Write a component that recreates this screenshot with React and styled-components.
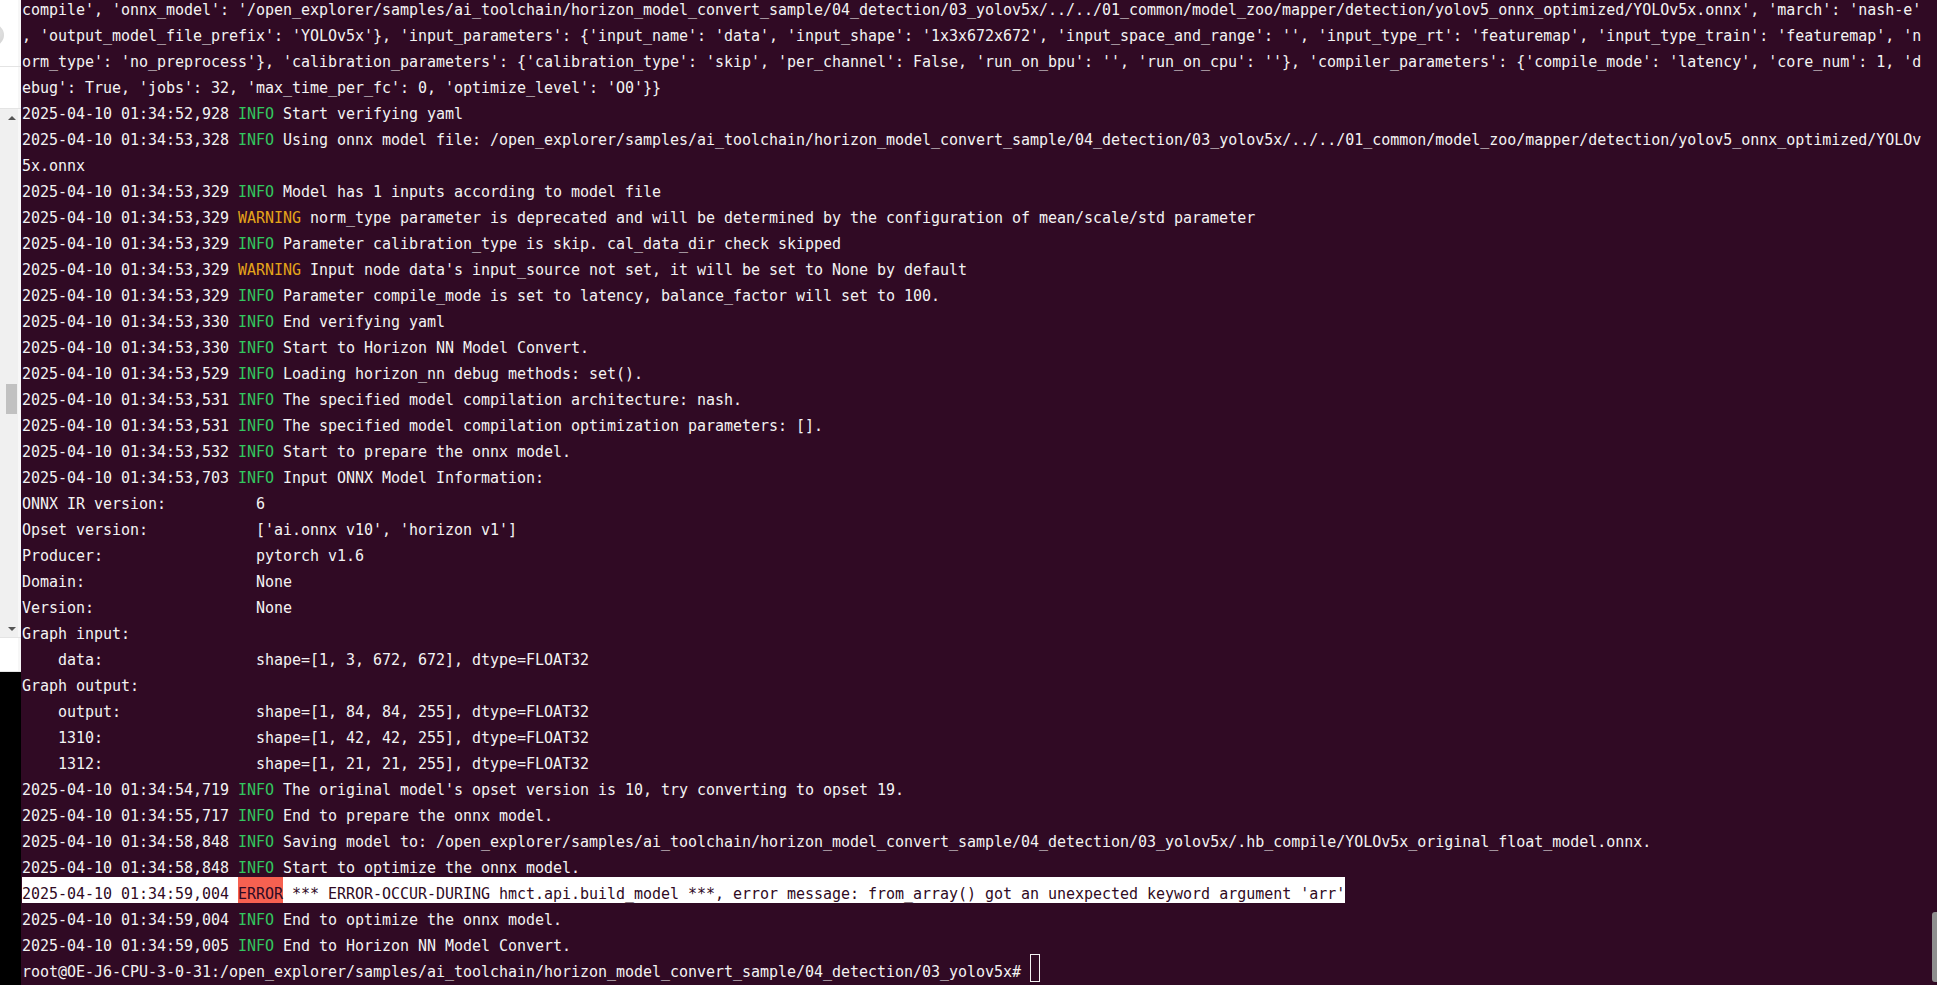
import React from 'react';
import styled, { createGlobalStyle } from 'styled-components';

const GlobalStyle = createGlobalStyle`
  html, body {
    margin: 0;
    padding: 0;
    height: 100%;
    background: #300a24;
    overflow: hidden;
  }
`;

const Screen = styled.div`
  display: flex;
  width: 100vw;
  height: 100vh;
  overflow: hidden;
`;

// left: edge of another window that peeks in
const SideStrip = styled.aside`
  width: 21px;
  flex: none;
  display: flex;
  flex-direction: column;
  background: #000;
`;

const SidePanel = styled.div`
  box-sizing: border-box;
  height: ${p => p.$h}px;
  flex: none;
  background: #fff;
  border-bottom: 1px solid #e4e4e4;
  box-shadow: inset -3px 0 0 #f7f7f7;
  display: flex;
  align-items: flex-start;
  overflow: hidden;
`;

const Avatar = styled.div`
  width: 22px;
  height: 22px;
  flex: none;
  margin: 24px 0 0 -18px;
  border-radius: 50%;
  background: radial-gradient(circle at 70% 40%, #e2e2e2, #c9c9c9);
`;

const Track = styled.div`
  box-sizing: border-box;
  height: 529px;
  flex: none;
  display: flex;
  flex-direction: column;
  background: #f0f0f0;
  border-bottom: 1px solid #e4e4e4;
  box-shadow: inset -3px 0 0 #f7f7f7;
`;

const ArrowBtn = styled.div`
  height: ${p => p.$h}px;
  flex: none;
  display: flex;
  align-items: center;
  padding-left: 8px;
`;

const Arrow = styled.span`
  width: 0;
  height: 0;
  border-left: 4px solid transparent;
  border-right: 4px solid transparent;
  ${p => p.$dir === 'up'
    ? 'border-bottom: 4px solid #555;'
    : 'border-top: 4px solid #555;'}
`;

const Rail = styled.div`
  flex: 1;
  padding-left: 6px;
`;

const Thumb = styled.div`
  width: 11px;
  height: 30px;
  margin-top: ${p => p.$offset}px;
  background: #c1c1c1;
`;

const BlackFill = styled.div`
  flex: 1;
  background: #000;
`;

const Terminal = styled.main`
  flex: 1;
  position: relative;
  background: #300a24;
  overflow: hidden;
  padding-left: 1px;
  font-family: "DejaVu Sans Mono", "Liberation Mono", monospace;
  font-size: 15px;
  letter-spacing: -0.03px;
  color: #f3f3f3;
`;

const Lines = styled.div`
  margin-top: -7px;
`;

const Row = styled.div`
  height: 26px;
  line-height: 34px;
  white-space: pre;
  width: ${p => (p.$selected ? 'fit-content' : 'auto')};
  background: ${p => (p.$selected ? '#ffffff' : 'transparent')};
  color: ${p => (p.$selected ? '#300a24' : 'inherit')};
`;

const levelColors = {
  INFO: '#33c65f',
  WARNING: '#e3a41a',
};

const Level = styled.span`
  color: ${p => levelColors[p.$level]};
`;

const ErrorTag = styled.span`
  display: inline-block;
  height: 26px;
  vertical-align: top;
  background: #f66151;
  color: #300a24;
`;

const Cursor = styled.span`
  display: inline-block;
  box-sizing: border-box;
  width: 10px;
  height: 28px;
  vertical-align: top;
  margin-top: -1px;
  border: 1px solid #f3f3f3;
`;

const OverlayScroll = styled.div`
  position: absolute;
  right: 0;
  top: 912px;
  width: 5px;
  height: 70px;
  border-radius: 3px 0 0 3px;
  background: #8f8f8f;
`;

const kv = (k, v) => k.padEnd(26, ' ') + v;

const rows = [
  { t: 'plain', s: "compile', 'onnx_model': '/open_explorer/samples/ai_toolchain/horizon_model_convert_sample/04_detection/03_yolov5x/../../01_common/model_zoo/mapper/detection/yolov5_onnx_optimized/YOLOv5x.onnx', 'march': 'nash-e'" },
  { t: 'plain', s: ", 'output_model_file_prefix': 'YOLOv5x'}, 'input_parameters': {'input_name': 'data', 'input_shape': '1x3x672x672', 'input_space_and_range': '', 'input_type_rt': 'featuremap', 'input_type_train': 'featuremap', 'n" },
  { t: 'plain', s: "orm_type': 'no_preprocess'}, 'calibration_parameters': {'calibration_type': 'skip', 'per_channel': False, 'run_on_bpu': '', 'run_on_cpu': ''}, 'compiler_parameters': {'compile_mode': 'latency', 'core_num': 1, 'd" },
  { t: 'plain', s: "ebug': True, 'jobs': 32, 'max_time_per_fc': 0, 'optimize_level': 'O0'}}" },
  { t: 'log', ts: '2025-04-10 01:34:52,928', lv: 'INFO', s: 'Start verifying yaml' },
  { t: 'log', ts: '2025-04-10 01:34:53,328', lv: 'INFO', s: 'Using onnx model file: /open_explorer/samples/ai_toolchain/horizon_model_convert_sample/04_detection/03_yolov5x/../../01_common/model_zoo/mapper/detection/yolov5_onnx_optimized/YOLOv' },
  { t: 'plain', s: '5x.onnx' },
  { t: 'log', ts: '2025-04-10 01:34:53,329', lv: 'INFO', s: 'Model has 1 inputs according to model file' },
  { t: 'log', ts: '2025-04-10 01:34:53,329', lv: 'WARNING', s: 'norm_type parameter is deprecated and will be determined by the configuration of mean/scale/std parameter' },
  { t: 'log', ts: '2025-04-10 01:34:53,329', lv: 'INFO', s: 'Parameter calibration_type is skip. cal_data_dir check skipped' },
  { t: 'log', ts: '2025-04-10 01:34:53,329', lv: 'WARNING', s: "Input node data's input_source not set, it will be set to None by default" },
  { t: 'log', ts: '2025-04-10 01:34:53,329', lv: 'INFO', s: 'Parameter compile_mode is set to latency, balance_factor will set to 100.' },
  { t: 'log', ts: '2025-04-10 01:34:53,330', lv: 'INFO', s: 'End verifying yaml' },
  { t: 'log', ts: '2025-04-10 01:34:53,330', lv: 'INFO', s: 'Start to Horizon NN Model Convert.' },
  { t: 'log', ts: '2025-04-10 01:34:53,529', lv: 'INFO', s: 'Loading horizon_nn debug methods: set().' },
  { t: 'log', ts: '2025-04-10 01:34:53,531', lv: 'INFO', s: 'The specified model compilation architecture: nash.' },
  { t: 'log', ts: '2025-04-10 01:34:53,531', lv: 'INFO', s: 'The specified model compilation optimization parameters: [].' },
  { t: 'log', ts: '2025-04-10 01:34:53,532', lv: 'INFO', s: 'Start to prepare the onnx model.' },
  { t: 'log', ts: '2025-04-10 01:34:53,703', lv: 'INFO', s: 'Input ONNX Model Information:' },
  { t: 'plain', s: kv('ONNX IR version:', '6') },
  { t: 'plain', s: kv('Opset version:', "['ai.onnx v10', 'horizon v1']") },
  { t: 'plain', s: kv('Producer:', 'pytorch v1.6') },
  { t: 'plain', s: kv('Domain:', 'None') },
  { t: 'plain', s: kv('Version:', 'None') },
  { t: 'plain', s: 'Graph input:' },
  { t: 'plain', s: kv('    data:', 'shape=[1, 3, 672, 672], dtype=FLOAT32') },
  { t: 'plain', s: 'Graph output:' },
  { t: 'plain', s: kv('    output:', 'shape=[1, 84, 84, 255], dtype=FLOAT32') },
  { t: 'plain', s: kv('    1310:', 'shape=[1, 42, 42, 255], dtype=FLOAT32') },
  { t: 'plain', s: kv('    1312:', 'shape=[1, 21, 21, 255], dtype=FLOAT32') },
  { t: 'log', ts: '2025-04-10 01:34:54,719', lv: 'INFO', s: "The original model's opset version is 10, try converting to opset 19." },
  { t: 'log', ts: '2025-04-10 01:34:55,717', lv: 'INFO', s: 'End to prepare the onnx model.' },
  { t: 'log', ts: '2025-04-10 01:34:58,848', lv: 'INFO', s: 'Saving model to: /open_explorer/samples/ai_toolchain/horizon_model_convert_sample/04_detection/03_yolov5x/.hb_compile/YOLOv5x_original_float_model.onnx.' },
  { t: 'log', ts: '2025-04-10 01:34:58,848', lv: 'INFO', s: 'Start to optimize the onnx model.' },
  { t: 'error', ts: '2025-04-10 01:34:59,004', s: "*** ERROR-OCCUR-DURING hmct.api.build_model ***, error message: from_array() got an unexpected keyword argument 'arr'" },
  { t: 'log', ts: '2025-04-10 01:34:59,004', lv: 'INFO', s: 'End to optimize the onnx model.' },
  { t: 'log', ts: '2025-04-10 01:34:59,005', lv: 'INFO', s: 'End to Horizon NN Model Convert.' },
];

const prompt = 'root@OE-J6-CPU-3-0-31:/open_explorer/samples/ai_toolchain/horizon_model_convert_sample/04_detection/03_yolov5x# ';

function Line({ row }) {
  if (row.t === 'log') {
    return (
      <Row>
        {row.ts + ' '}
        <Level $level={row.lv}>{row.lv}</Level>
        {' ' + row.s}
      </Row>
    );
  }
  if (row.t === 'error') {
    return (
      <Row $selected>
        {row.ts + ' '}
        <ErrorTag>ERROR</ErrorTag>
        {' ' + row.s}
      </Row>
    );
  }
  return <Row>{row.s}</Row>;
}

export default function App() {
  return (
    <Screen>
      <GlobalStyle />
      <SideStrip>
        <SidePanel $h={67}>
          <Avatar />
        </SidePanel>
        <SidePanel $h={42} />
        <Track>
          <ArrowBtn $h={18}>
            <Arrow $dir="up" />
          </ArrowBtn>
          <Rail>
            <Thumb $offset={257} />
          </Rail>
          <ArrowBtn $h={17}>
            <Arrow $dir="down" />
          </ArrowBtn>
        </Track>
        <SidePanel $h={34} />
        <BlackFill />
      </SideStrip>
      <Terminal>
        <Lines>
          {rows.map((r, i) => (
            <Line key={i} row={r} />
          ))}
          <Row>
            {prompt}
            <Cursor />
          </Row>
        </Lines>
        <OverlayScroll />
      </Terminal>
    </Screen>
  );
}
